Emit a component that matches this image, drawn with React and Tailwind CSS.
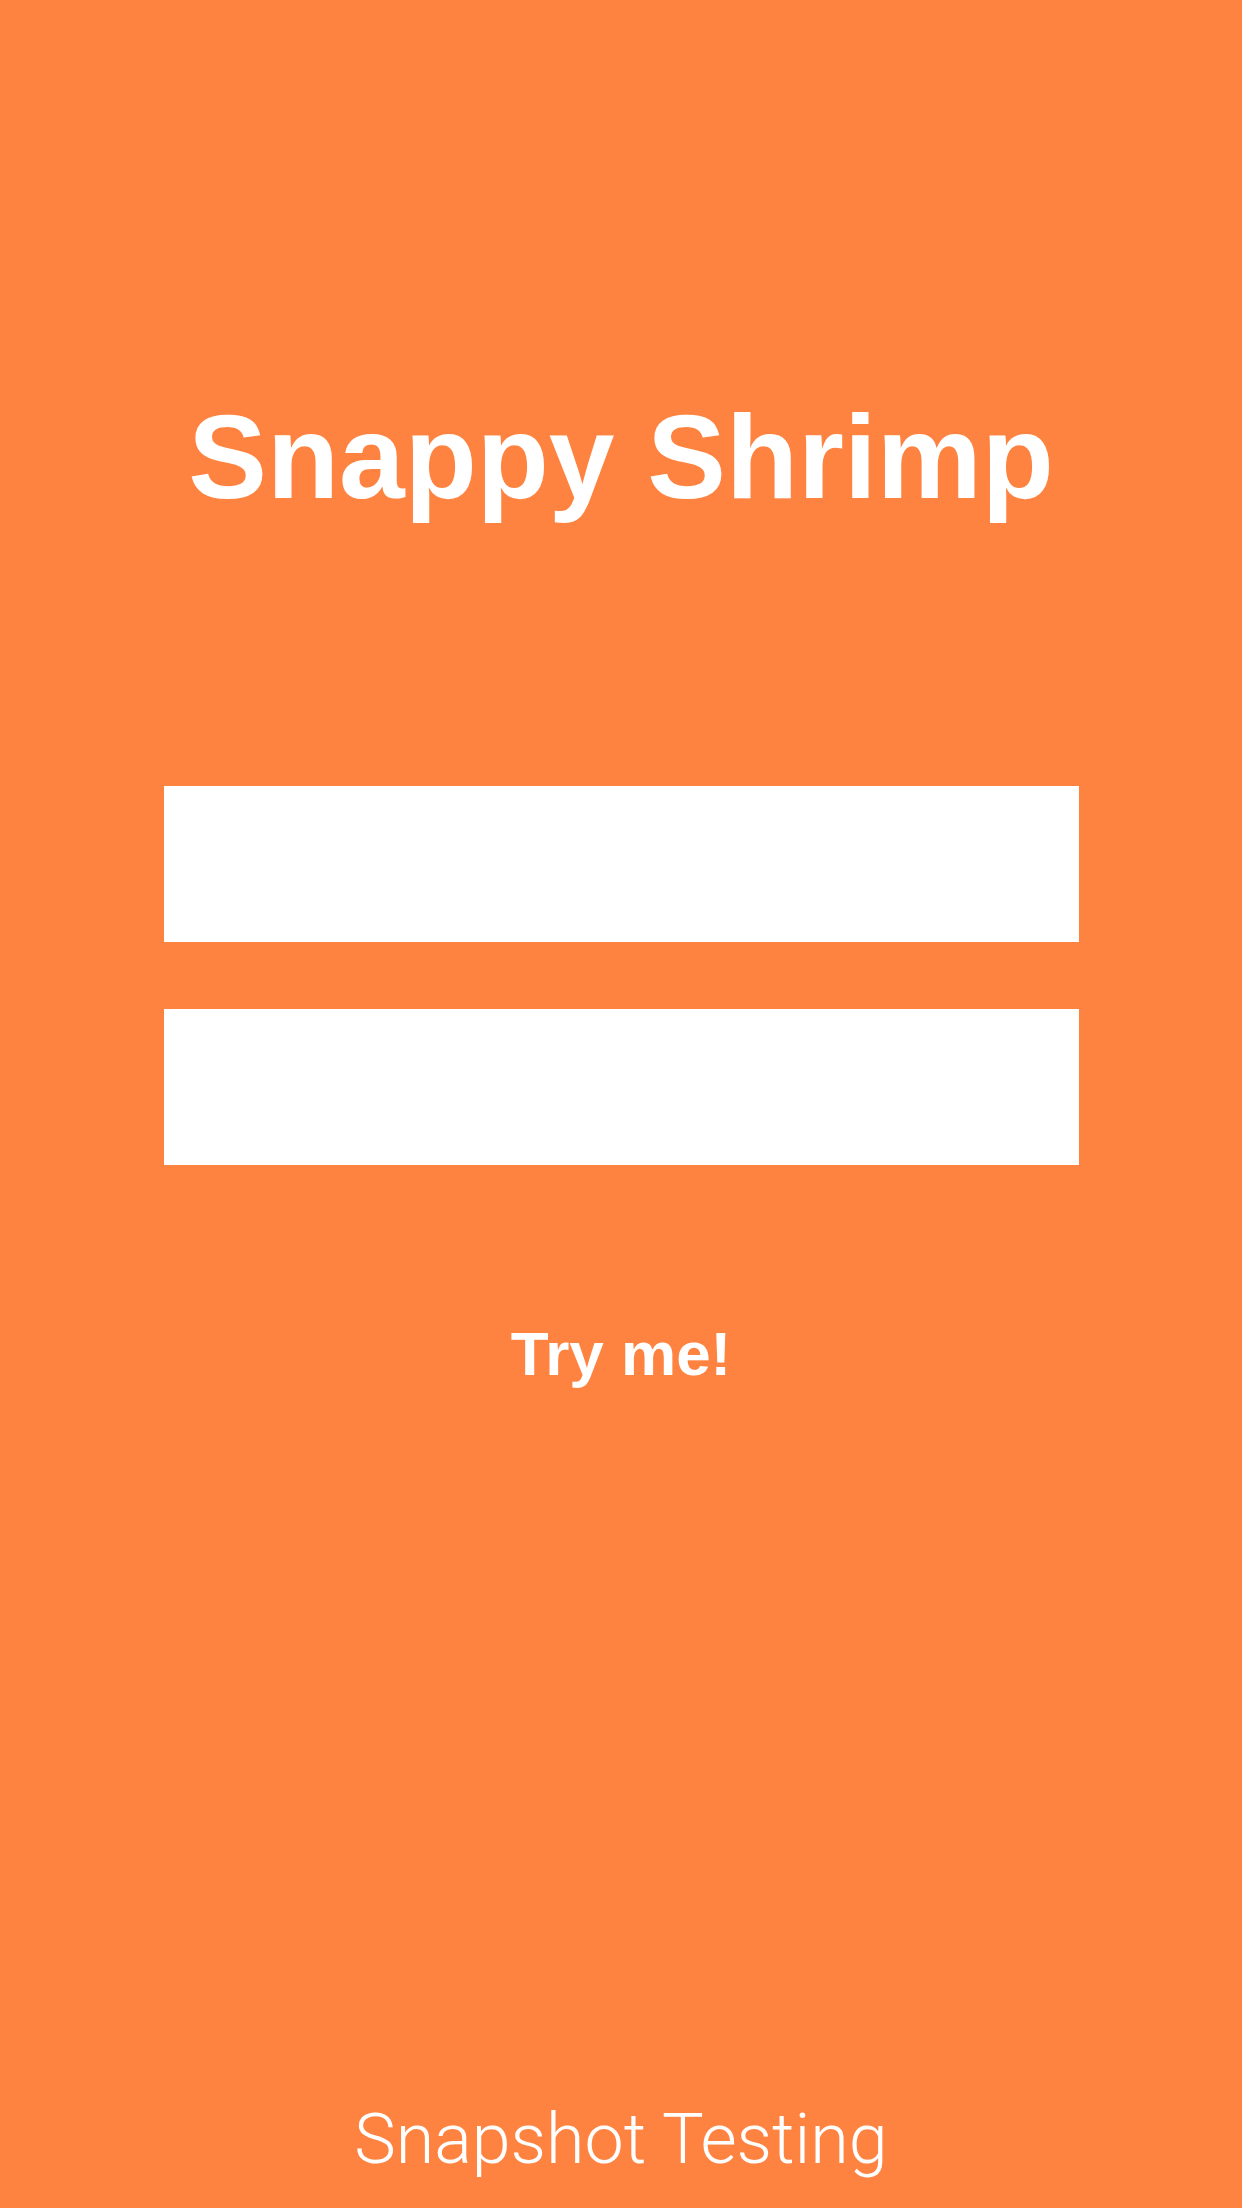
import React, { useState } from "react";

const App = () => {
  const [name, setName] = useState("");
  const [email, setEmail] = useState("");

  return (
    <div className="flex h-[2208px] w-full flex-col items-center bg-[#ff8340] font-['Liberation_Sans',Arial,sans-serif] text-white">
      <h1 className="mt-[398px] text-[118px] font-bold leading-none">
        Snappy Shrimp
      </h1>

      <div className="mt-[270px] flex w-[915px] flex-col gap-[67px]">
        <input
          value={name}
          onChange={(e) => setName(e.target.value)}
          className="h-[156px] w-full border-0 bg-white px-6 text-5xl text-gray-800 outline-none"
        />
        <input
          value={email}
          onChange={(e) => setEmail(e.target.value)}
          className="h-[156px] w-full border-0 bg-white px-6 text-5xl text-gray-800 outline-none"
        />
      </div>

      <button className="mt-[158px] cursor-pointer text-[62px] font-bold leading-none">
        Try me!
      </button>

      <p className="mt-auto pb-[34px] font-['Roboto',sans-serif] text-[70px] font-light leading-none">
        Snapshot Testing
      </p>
    </div>
  );
};

export default App;
